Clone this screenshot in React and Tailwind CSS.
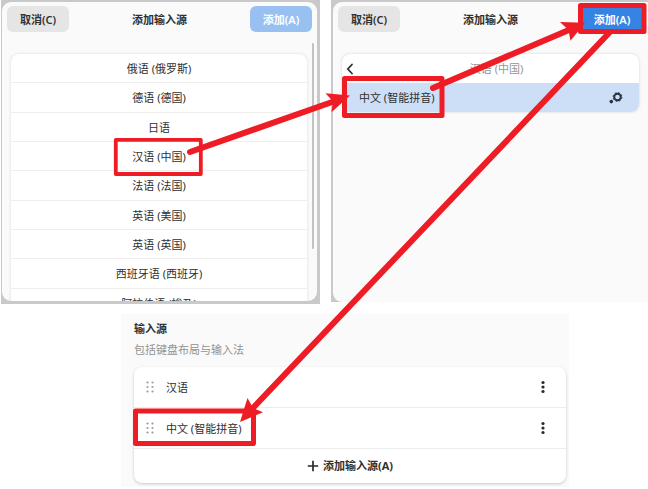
const languages = [
  '俄语 (俄罗斯)',
  '德语 (德国)',
  '日语',
  '汉语 (中国)',
  '法语 (法国)',
  '英语 (美国)',
  '英语 (英国)',
  '西班牙语 (西班牙)',
  '阿拉伯语 (埃及)',
];

const sources = ['汉语', '中文 (智能拼音)'];

function BackIcon() {
  return (
    <svg width="8" height="12" viewBox="0 0 8 12" fill="none" stroke="#2e3436" strokeWidth="1.8" strokeLinecap="round">
      <path d="M6 1.5 L1.8 6 L6 10.5" />
    </svg>
  );
}

function GearsIcon() {
  return (
    <svg width="14" height="12" viewBox="0 0 14 12" fill="none" stroke="#2b3440">
      <circle cx="8.5" cy="5" r="3.3" strokeWidth="2" />
      <circle cx="8.5" cy="5" r="4.4" strokeWidth="1" strokeDasharray="1.73 1.73" />
      <circle cx="2.3" cy="9.6" r="1.8" fill="#2b3440" stroke="none" />
    </svg>
  );
}

function DragIcon() {
  return (
    <svg width="8" height="14" viewBox="0 0 8 14" fill="#9b9b9b">
      {[2.5, 7, 11.5].map((y) => (
        <g key={y}>
          <circle cx="1.5" cy={y} r="1.1" />
          <circle cx="6.5" cy={y} r="1.1" />
        </g>
      ))}
    </svg>
  );
}

function MoreIcon() {
  return (
    <svg width="6" height="14" viewBox="0 0 6 14" fill="#2a2a2a">
      <circle cx="3" cy="2.5" r="1.6" />
      <circle cx="3" cy="7" r="1.6" />
      <circle cx="3" cy="11.5" r="1.6" />
    </svg>
  );
}

function PlusIcon() {
  return (
    <svg width="12" height="12" viewBox="0 0 12 12" stroke="#2a2a2a" strokeWidth="1.7">
      <path d="M6 0.8 V11.2 M0.8 6 H11.2" />
    </svg>
  );
}

function DialogHeader({ ready }) {
  return (
    <header className="flex items-center justify-between px-[5px] pt-1">
      <button type="button" className="h-[26px] w-[62px] rounded-md bg-[#e5e5e5] pt-px font-semibold">
        取消(C)
      </button>
      <h2 className="pt-px font-bold">添加输入源</h2>
      <button
        type="button"
        className={
          ready
            ? 'h-[26px] w-[62px] rounded-md bg-[#3584e4] pt-px font-semibold text-white'
            : 'h-[26px] w-[62px] rounded-md bg-[#98c0f0] pt-px font-semibold text-white'
        }
      >
        添加(A)
      </button>
    </header>
  );
}

function LanguageDialog() {
  return (
    <section className="h-[304px] bg-[#c9c9c9] pt-0.5 pr-[3px] pl-px">
      <div className="relative h-[299px] overflow-hidden rounded-[9px] bg-[#fafafa]">
        <DialogHeader />
        <ul className="mt-[22px] mr-2.5 ml-[9px] grid h-[264px] auto-rows-fr divide-y divide-[#eeeeee] rounded-t-lg bg-white shadow-[0_0_3px_rgba(0,0,0,0.14)]">
          {languages.map((name) => (
            <li key={name} className="flex">
              <button type="button" className="w-full pt-0.5">
                {name}
              </button>
            </li>
          ))}
        </ul>
        <div className="absolute top-[41px] right-[3px] h-[206px] w-0.5 rounded-full bg-[#c2c2c2]" />
      </div>
    </section>
  );
}

function LayoutDialog() {
  return (
    <section className="h-[302px] overflow-hidden bg-[#c9c9c9] pt-0.5 pl-0.5">
      <div className="h-[300px] rounded-l-[9px] bg-[#fafafa]">
        <DialogHeader ready />
        <div className="mt-[22px] mr-[9px] ml-[9px] overflow-hidden rounded-lg bg-white shadow-[0_0_3px_rgba(0,0,0,0.16)]">
          <div className="flex h-[29px] items-center pl-1">
            <button type="button" aria-label="返回">
              <BackIcon />
            </button>
            <p className="flex-1 pt-px text-center text-[#969696]">汉语 (中国)</p>
          </div>
          <div className="flex h-[29px] items-center justify-between bg-[#cddff7] pr-4 pl-[17px]">
            <span className="pt-px">中文 (智能拼音)</span>
            <GearsIcon />
          </div>
        </div>
      </div>
    </section>
  );
}

function InputSources() {
  return (
    <section className="mt-2.5 mr-[79px] ml-[121px] bg-[#fafafa] pt-1.5 pr-[3px] pb-1 pl-[13px]">
      <h2 className="leading-[18px] font-bold">输入源</h2>
      <p className="mt-0.5 leading-[20px] text-[#929292]">包括键盘布局与输入法</p>
      <div className="mt-[7px] divide-y divide-[#ececec] rounded-lg bg-white shadow-[0_1px_3px_rgba(0,0,0,0.2)]">
        {sources.map((name) => (
          <div key={name} className="flex h-[41px] items-center pr-5 pl-3">
            <DragIcon />
            <span className="ml-3 flex-1 pt-px">{name}</span>
            <button type="button" aria-label="更多">
              <MoreIcon />
            </button>
          </div>
        ))}
        <button type="button" className="flex h-[34px] w-full items-center justify-center gap-1 font-bold">
          <PlusIcon />
          添加输入源(A)
        </button>
      </div>
    </section>
  );
}

// Red frames and arrows that show the order of the steps
function Steps() {
  return (
    <svg className="pointer-events-none absolute inset-x-0 top-0 w-full" viewBox="0 0 648 489" fill="none" stroke="#ee1c25">
      <g strokeWidth="5" strokeLinejoin="round">
        <rect x="115.8" y="139.8" width="85" height="34.2" strokeWidth="3.8" />
        <rect x="344.5" y="78.5" width="97.5" height="37" />
        <rect x="580.5" y="5.5" width="63.5" height="26" />
        <rect x="135.5" y="411" width="118" height="32.5" />
      </g>
      <g strokeWidth="6" strokeLinecap="round">
        <path d="M190 152 L335 101" />
        <path d="M433 88 L570 29.5" />
        <path d="M609 33 L252 409" />
      </g>
      <g fill="#ee1c25" stroke="none">
        <path d="M350 95.5 L325.5 93.3 L333 101.5 L331.5 112.3 Z" />
        <path d="M585 22.8 L560 22 L568.5 30 L570.5 40.8 Z" />
        <path d="M240 422 L247.5 398 L253 408 L263 412.3 Z" />
      </g>
    </svg>
  );
}

export default function App() {
  return (
    <main className="relative bg-white pb-0.5 font-['Noto_Sans','Noto_Sans_CJK_SC',sans-serif] text-[11px] leading-4 text-[#303030]">
      <div className="grid grid-cols-[319fr_317fr] items-start gap-[11px] pl-px">
        <LanguageDialog />
        <LayoutDialog />
      </div>
      <InputSources />
      <Steps />
    </main>
  );
}
